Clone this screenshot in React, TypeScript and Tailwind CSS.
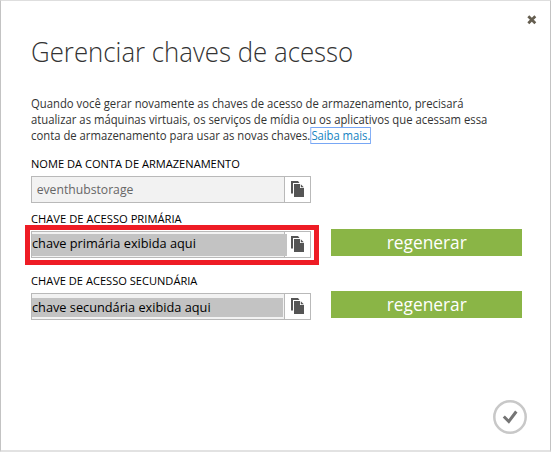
import React from 'react';

const CopyIcon = () => (
  <svg width="14" height="17" viewBox="0 0 14 17" fill="#555">
    <path d="M0 0h7l1.5 2H2V12.5H0z" />
    <path d="M3 3h6v4h4v9H3z" />
    <path d="M9.8 3.2L12.8 6.2H9.8z" />
  </svg>
);

function KeyField({ children, id }: { children: React.ReactNode; id: string }) {
  return (
    <div className="flex h-[27px] w-[280px] shrink-0 border border-[#b9b9b9] bg-white">
      <div id={id} className="relative flex w-[253px] shrink-0 items-center border-r border-[#b9b9b9] bg-[#f2f2f2]">
        {children}
      </div>
      <button aria-label="Copiar" className="flex flex-1 items-start pt-1 pl-[6px]">
        <CopyIcon />
      </button>
    </div>
  );
}

function Regenerate() {
  return (
    <button className="-mt-[2px] ml-5 flex h-[27px] w-[191px] items-center justify-center bg-[#8ab546] text-[18.5px] leading-none text-white">
      <span className="ml-px inline-block scale-x-[0.937]">regenerar</span>
    </button>
  );
}

export default function App() {
  return (
    <main
      className="relative h-[452px] w-[551px] overflow-hidden border-t border-r border-b-2 border-l border-t-[#dedede] border-r-[#c3c3c3] border-b-[#e2e2e2] border-l-[#c3c3c3] bg-white pl-[30px] text-[#333] [font-family:'Open_Sans','Noto_Sans',sans-serif]"
    >
      <button aria-label="Fechar" className="absolute top-[14px] left-[526px]">
        <svg width="10" height="10" viewBox="0 0 10 10" stroke="#655e50" strokeWidth="2.7">
          <path d="M1.3 1.3l7 7M8.3 1.3l-7 7" />
        </svg>
      </button>
      <h1 className="mt-[30px] h-[40px] origin-left scale-x-[0.912] text-[28.3px] leading-[40px] font-light whitespace-nowrap">
        Gerenciar chaves de acesso
      </h1>
      <div className="mt-[25px] origin-left scale-x-[0.904] text-[12.5px] leading-4 whitespace-nowrap">
        <div>Quando você gerar novamente as chaves de acesso de armazenamento, precisará</div>
        <div>atualizar as máquinas virtuais, os serviços de mídia ou os aplicativos que acessam essa</div>
        <div>
          conta de armazenamento para usar as novas chaves.{' '}
          <a href="#mais" className="-ml-[2px] inline-block h-[15px] leading-4 tracking-[-0.05px] text-[#1583c2] outline outline-[#78a7f5]">Saiba mais.</a>
        </div>
      </div>
      <div className="mt-[12px] h-4 origin-left scale-x-[0.964] text-[11.5px] leading-4 whitespace-nowrap text-black">NOME DA CONTA DE ARMAZENAMENTO</div>
      <div className="mt-[4px] flex">
        <KeyField id="conta">
          <span className="origin-left scale-x-[0.937] pt-px pl-[5px] text-[13px] text-[#666]">eventhubstorage</span>
        </KeyField>
      </div>
      <div className="mt-[8px] h-4 origin-left scale-x-[0.973] text-[11.5px] leading-4 whitespace-nowrap text-black">CHAVE DE ACESSO PRIMÁRIA</div>
      <div className="relative mt-[4px] flex">
        <KeyField id="primaria">
          <div className="absolute top-[2px] left-0 flex h-[22px] w-[255px] items-center bg-[#c3c3c3] pb-[3px] text-[13px] whitespace-nowrap text-black">
            <span className="origin-left scale-x-[0.98]">chave primária exibida aqui</span>
          </div>
        </KeyField>
        <Regenerate />
        <div className="pointer-events-none absolute -top-[6px] -left-[6px] h-[40px] w-[294px] border-[5px] border-[#ee1c25]" />
      </div>
      <div className="mt-[15px] h-4 origin-left scale-x-[0.964] text-[11.5px] leading-4 whitespace-nowrap text-black">CHAVE DE ACESSO SECUNDÁRIA</div>
      <div className="mt-[4px] flex">
        <KeyField id="secundaria">
          <div className="absolute top-[4px] left-0 flex h-[19px] w-[251px] items-center bg-[#c3c3c3] text-[13px] whitespace-nowrap text-black">
            <span className="origin-left scale-x-[0.98]">chave secundária exibida aqui</span>
          </div>
        </KeyField>
        <Regenerate />
      </div>
      <button aria-label="Confirmar" className="absolute top-[398px] left-[491px]">
        <svg width="36" height="36" viewBox="0 0 36 36" fill="none">
          <circle cx="18" cy="18" r="15.7" stroke="#c8c8c8" strokeWidth="2.5" />
          <path d="M11.8 17.5l5 5 7.5-10" stroke="#757575" strokeWidth="3" />
        </svg>
      </button>
    </main>
  );
}
